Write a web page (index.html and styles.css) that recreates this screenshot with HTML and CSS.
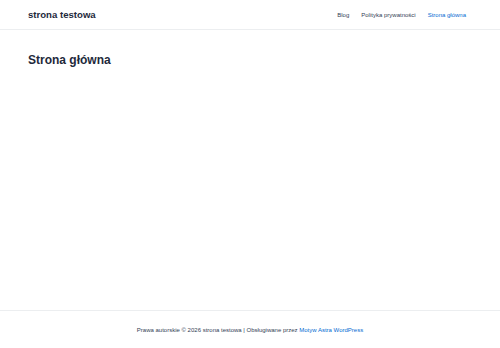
FILE: index.html
```html
<!DOCTYPE html>
<html lang="pl">
	<head>
		<meta charset="UTF-8">
		<title>strona testowa</title>
		<link rel="stylesheet" href="styles.css">
	</head>
	<body>
		<div id="site">
			<header id="masthead">
				<div class="site-title">strona testowa</div>
				<nav class="main-nav">
					<a href="#">Blog</a>
					<a href="#">Polityka prywatności</a>
					<a href="#" class="current">Strona główna</a>
				</nav>
			</header>
			<main id="content">
				<h1 class="entry-title">Strona główna</h1>
			</main>
			<footer id="colophon">
				<p>Prawa autorskie © 2026 strona testowa | Obsługiwane przez <a href="#">Motyw Astra WordPress</a></p>
			</footer>
		</div>
	</body>
</html>
```

FILE: styles.css
```css
html, body {
	box-sizing: border-box;
	margin: 0;
	padding: 0;
	font-family: 'Liberation Sans', Arial, sans-serif;
	background-color: #ffffff;
	color: #334155;
}

#site {
	display: flex;
	flex-direction: column;
	min-height: 100vh;
}

#masthead {
	display: flex;
	align-items: center;
	justify-content: space-between;
	height: 29px;
	padding: 0 28px;
	border-bottom: 1px solid #eceef0;
}

.site-title {
	font-size: 9.6px;
	font-weight: bold;
	color: #1e293b;
}

.main-nav {
	display: flex;
}

.main-nav a {
	font-size: 6px;
	color: #334155;
	text-decoration: none;
	padding: 0 6px;
}

.main-nav a.current {
	color: #046bd2;
}

#content {
	flex: 1;
	padding: 23px 28px 0;
}

.entry-title {
	margin: 0;
	font-size: 12px;
	line-height: 14px;
	color: #1e293b;
}

#colophon {
	border-top: 1px solid #eceef0;
	height: 37px;
	display: flex;
	align-items: center;
	justify-content: center;
}

#colophon p {
	margin: 0;
	font-size: 6px;
	color: #334155;
}

#colophon a {
	color: #046bd2;
	text-decoration: none;
}
```
